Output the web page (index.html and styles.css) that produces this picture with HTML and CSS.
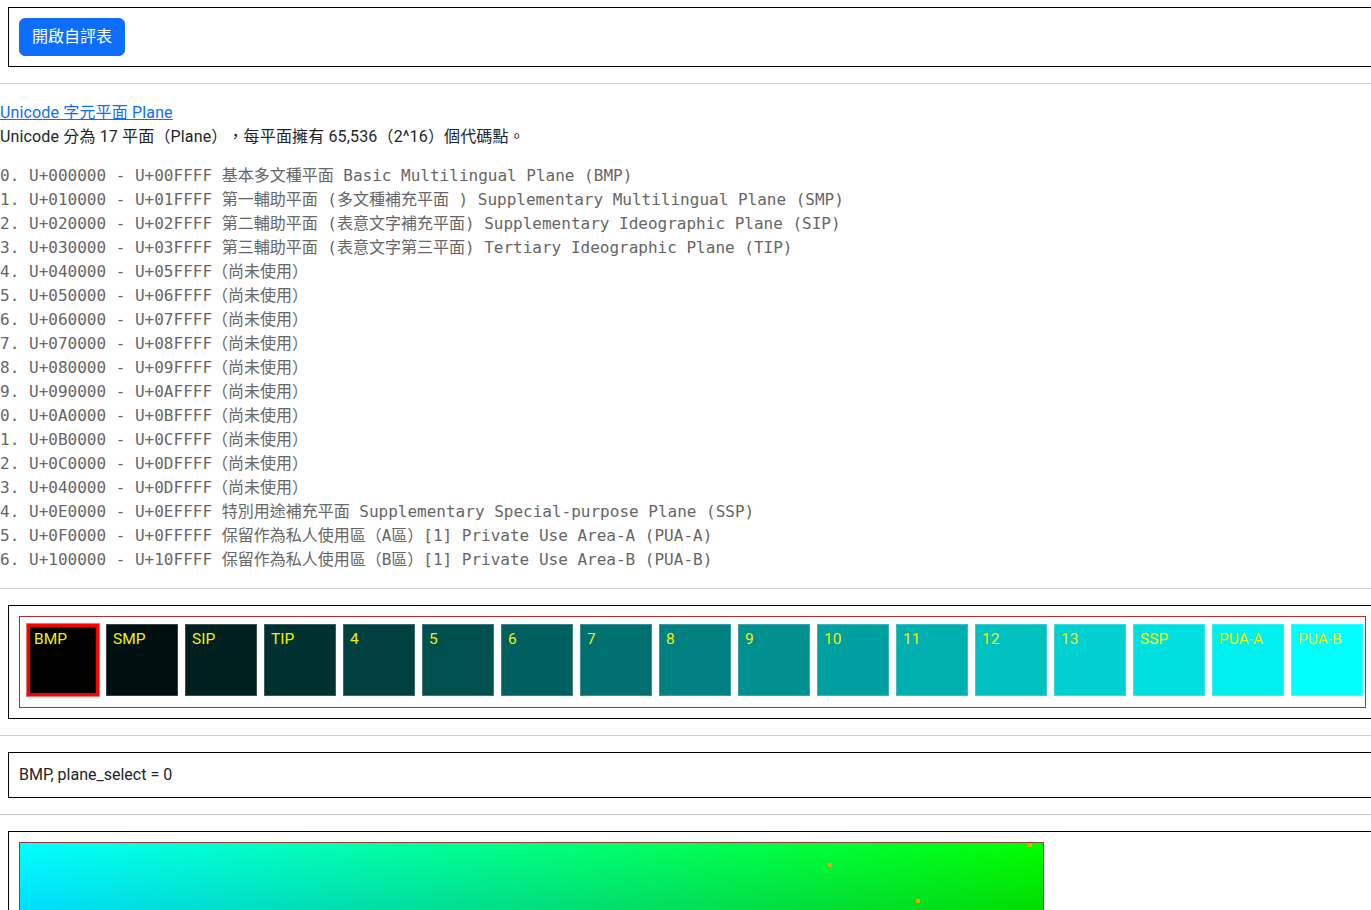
FILE: index.html
```html
<!DOCTYPE html>
<html lang="zh-Hant">
<head>
<meta charset="utf-8">
<title>Unicode Plane</title>
<link rel="stylesheet" href="styles.css">
</head>
<body>
<div class="panel panel-first">
  <button class="btn" type="button">開啟自評表</button>
</div>
<hr class="sep">
<div class="intro">
  <a class="intro-link" href="#">Unicode 字元平面 Plane</a><br>
  Unicode 分為 17 平面（Plane），每平面擁有 65,536（2^16）個代碼點。
</div>
<ol class="plane-list" start="0">
  <li>U+000000 - U+00FFFF 基本多文種平面 Basic Multilingual Plane (BMP)</li>
  <li>U+010000 - U+01FFFF 第一輔助平面 (多文種補充平面 ) Supplementary Multilingual Plane (SMP)</li>
  <li>U+020000 - U+02FFFF 第二輔助平面 (表意文字補充平面) Supplementary Ideographic Plane (SIP)</li>
  <li>U+030000 - U+03FFFF 第三輔助平面 (表意文字第三平面) Tertiary Ideographic Plane (TIP)</li>
  <li>U+040000 - U+05FFFF（尚未使用）</li>
  <li>U+050000 - U+06FFFF（尚未使用）</li>
  <li>U+060000 - U+07FFFF（尚未使用）</li>
  <li>U+070000 - U+08FFFF（尚未使用）</li>
  <li>U+080000 - U+09FFFF（尚未使用）</li>
  <li>U+090000 - U+0AFFFF（尚未使用）</li>
  <li>U+0A0000 - U+0BFFFF（尚未使用）</li>
  <li>U+0B0000 - U+0CFFFF（尚未使用）</li>
  <li>U+0C0000 - U+0DFFFF（尚未使用）</li>
  <li>U+040000 - U+0DFFFF（尚未使用）</li>
  <li>U+0E0000 - U+0EFFFF 特別用途補充平面 Supplementary Special-purpose Plane (SSP)</li>
  <li>U+0F0000 - U+0FFFFF 保留作為私人使用區（A區）[1] Private Use Area-A (PUA-A)</li>
  <li>U+100000 - U+10FFFF 保留作為私人使用區（B區）[1] Private Use Area-B (PUA-B)</li>
</ol>
<hr class="sep">
<div class="panel">
  <div class="tile-row">
    <div class="tile tile-selected" style="background:rgb(0,0,0)">BMP</div>
    <div class="tile" style="background:rgb(0,16,16)">SMP</div>
    <div class="tile" style="background:rgb(0,32,32)">SIP</div>
    <div class="tile" style="background:rgb(0,48,48)">TIP</div>
    <div class="tile" style="background:rgb(0,64,64)">4</div>
    <div class="tile" style="background:rgb(0,80,80)">5</div>
    <div class="tile" style="background:rgb(0,96,96)">6</div>
    <div class="tile" style="background:rgb(0,112,112)">7</div>
    <div class="tile" style="background:rgb(0,128,128)">8</div>
    <div class="tile" style="background:rgb(0,144,144)">9</div>
    <div class="tile" style="background:rgb(0,160,160)">10</div>
    <div class="tile" style="background:rgb(0,176,176)">11</div>
    <div class="tile" style="background:rgb(0,192,192)">12</div>
    <div class="tile" style="background:rgb(0,208,208)">13</div>
    <div class="tile" style="background:rgb(0,224,224)">SSP</div>
    <div class="tile" style="background:rgb(0,240,240)">PUA-A</div>
    <div class="tile" style="background:rgb(0,255,255)">PUA-B</div>
  </div>
</div>
<hr class="sep">
<div class="panel">BMP, plane_select = 0</div>
<hr class="sep">
<div class="panel">
  <div class="plane-canvas">
    <span class="dot" style="left:808px;top:20px"></span>
    <span class="dot" style="left:1008px;top:0px"></span>
    <span class="dot" style="left:896px;top:56px"></span>
  </div>
</div>
</body>
</html>
```

FILE: styles.css
```css
html {
  overflow-x: hidden;
  scrollbar-width: none;
}

body {
  margin: 0;
  font-family: Roboto, "Noto Sans CJK TC", sans-serif;
  font-size: 16px;
  line-height: 24px;
  color: #212529;
  background: #fff;
  text-spacing-trim: space-all;
}

.panel {
  width: 100%;
  margin: 0 0 0 8px;
  padding: 10px;
  border: 1px solid #000;
}

.panel-first {
  margin-top: 7px;
}

.btn {
  display: block;
  padding: 6px 12px;
  font-family: Roboto, "Noto Sans CJK TC", sans-serif;
  font-size: 16px;
  line-height: 24px;
  color: #fff;
  background: #0d6efd;
  border: 1px solid #0d6efd;
  border-radius: 6px;
}

.sep {
  margin: 16px 0;
  border: 0;
  border-top: 1px solid #cccccc;
  height: 0;
}

.intro {
  margin: 0;
  padding-top: 1px;
  letter-spacing: 0.15px;
}

.intro-link {
  color: #0d6efd;
  text-decoration: underline;
}

.plane-list {
  margin: 15px 0 16px;
  padding-left: 29px;
  font-family: "DejaVu Sans Mono", "Noto Sans CJK TC", monospace;
  font-size: 16px;
  line-height: 24px;
  color: #666;
}

.plane-list li {
  white-space: pre;
}

.tile-row {
  display: flex;
  gap: 7px;
  width: max-content;
  padding: 7px 2px 11px 7px;
  border: 1px solid #b52a2a;
}

.tile {
  box-sizing: border-box;
  width: 72px;
  height: 72px;
  padding: 2px 6px 0;
  border: 1px solid rgba(255, 255, 255, 0.22);
  color: #f4f000;
  font-size: 15.5px;
  line-height: 24px;
}

.tile-selected {
  padding: 0 4px;
  border: 3px solid #ff0000;
  box-shadow: 0 0 0 1px rgba(220, 0, 0, 0.55);
}

.plane-canvas {
  position: relative;
  width: 1023px;
  height: 512px;
  border: 1px solid #9a3a3a;
  background-color: #000;
  background-image:
    linear-gradient(to bottom, #00ff00, #000000),
    linear-gradient(to right, #0000ff, #000000);
  background-blend-mode: screen;
}

.dot {
  position: absolute;
  width: 4px;
  height: 4px;
  background: #e8a800;
}
```
